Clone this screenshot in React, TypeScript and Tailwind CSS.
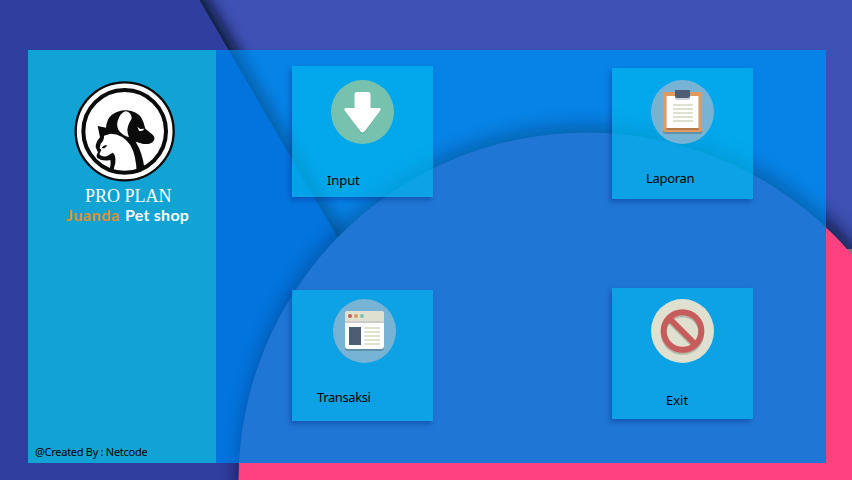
import React from "react";

type SceneProps = { left: string; right: string; circle: string; shade: number };

function Scene({ left, right, circle, shade }: SceneProps) {
  return (
    <g>
      <rect width="852" height="480" fill={right} />
      <path d="M120 -30L190 -30L354 249H120Z" fill="#00081c" opacity={shade} filter="url(#soft-line)" />
      <path d="M0 0H199.5L345 250V480H0Z" fill={left} />
      <circle cx="588" cy="473" r="347" fill="#00081c" opacity={shade} filter="url(#soft-circle)" />
      <rect x="840" y="249" width="12" height="12" fill="#85737c" />
      <circle cx="587" cy="481" r="348.5" fill={circle} />
    </g>
  );
}

function Backdrop() {
  return (
    <svg className="absolute inset-0" width="852" height="480" viewBox="0 0 852 480">
      <defs>
        <filter id="soft-line" x="-30%" y="-10%" width="160%" height="120%">
          <feGaussianBlur stdDeviation="7.5" />
        </filter>
        <filter id="soft-circle" x="-10%" y="-10%" width="120%" height="120%">
          <feGaussianBlur stdDeviation="10" />
        </filter>
        <clipPath id="panel">
          <rect x="216" y="50" width="610" height="413" />
        </clipPath>
      </defs>
      <Scene left="#303e9f" right="#3f51b5" circle="#ff4081" shade={0.85} />
      <g clipPath="url(#panel)">
        <Scene left="#0374de" right="#0783e7" circle="#2076d4" shade={0.3} />
      </g>
    </svg>
  );
}

function Logo() {
  return (
    <svg className="block" width="101" height="101" viewBox="42 31 303 303">
      <circle cx="194" cy="182" r="147" fill="#fff" stroke="#0b0b0b" strokeWidth="7" />
      <circle cx="194" cy="182" r="124" fill="#fff" stroke="#0b0b0b" strokeWidth="12" />
      <g transform="translate(90 102)">
        <path
          d="M23 64L48 69Q50 45 64 32Q85 16 110 17Q140 20 153 38Q162 52 166 72L188 90Q197 98 191 108Q184 120 160 118L137 111Q158 145 163 190L140 206Q139 152 121 121Q98 88 62 87L42 93Q43 107 32 117L29 130L34 136L28 148Q33 157 50 155L68 144Q78 149 76 174L68 206L56 196Q64 184 61 166Q37 171 22 160Q17 153 24 143L17 128Q17 112 30 98Z"
          fill="#0b0b0b"
        />
        <path d="M108 20Q124 22 125 42Q113 60 112 76Q113 88 117 98Q99 94 86 77Q76 60 88 36Q96 22 108 20Z" fill="#fff" />
        <path d="M142 66L151 73L163 72Q158 82 147 78Z" fill="#fff" />
        <path d="M35 131Q38 122 51 121Q48 132 35 131Z" fill="#0b0b0b" />
      </g>
    </svg>
  );
}

function Disc({ fill, children }: { fill: string; children: React.ReactNode }) {
  return (
    <svg className="block" width="63" height="64" viewBox="0 0 63 64">
      <ellipse cx="31.5" cy="32" rx="31.5" ry="32" fill={fill} />
      {children}
    </svg>
  );
}

const Arrow = () => (
  <Disc fill="#76c2af">
    <path d="M26 14H37Q39 14 39 16V28H48Q51 29 49 31L34 52Q31.500 55 29 52L14 31Q12 28 15 28H24V16Q24 14 26 14Z" fill="#000" opacity=".2" />
    <path d="M26 12H37Q39.500 12 39.500 14.500V28H48Q51 28 49 31L34 51Q31.500 54 29 51L14 31Q12 28 15 28H23.500V14.500Q23.500 12 26 12Z" fill="#fff" />
  </Disc>
);

const Clipboard = () => (
  <Disc fill="#77b3d4">
    <rect x="12" y="14" width="39" height="40" rx="2" fill="#000" opacity=".2" />
    <rect x="12" y="12" width="39" height="40" rx="2" fill="#e0995e" />
    <rect x="15.500" y="18" width="32" height="32" fill="#b3794a" />
    <rect x="15.500" y="16" width="32" height="32" fill="#fff" />
    <path d="M24 16H39V18Q39 20 37 20H26Q24 20 24 18Z" fill="#d0d0d8" />
    <path d="M24 10H39V16Q39 18 37 18H26Q24 18 24 16Z" fill="#4f5d73" />
    <path d="M22 25H42M22 29H42M22 33H42M22 37H42M22 41H42" stroke="#e0e0d1" strokeWidth="2" />
  </Disc>
);

const Browser = () => (
  <Disc fill="#77b3d4">
    <rect x="12" y="14" width="39" height="38" rx="3" fill="#000" opacity=".2" />
    <rect x="12" y="12" width="39" height="38" rx="3" fill="#fff" />
    <path d="M12 22V15Q12 12 15 12H48Q51 12 51 15V22Z" fill="#e0e0d1" />
    <rect x="12" y="22" width="39" height="2" fill="#ccc" />
    <circle cx="17" cy="17" r="2" fill="#c75c5c" />
    <circle cx="23" cy="17" r="2" fill="#e0995e" />
    <circle cx="29" cy="17" r="2" fill="#76c2af" />
    <rect x="16" y="28" width="12" height="18" fill="#4f5d73" />
    <path d="M31.500 29H47M31.500 33H47M31.500 37H47M31.500 41H47M31.500 45H47" stroke="#e0e0d1" strokeWidth="2" />
  </Disc>
);

const Prohibit = () => (
  <Disc fill="#e0e0d1">
    <g fill="none" stroke="#000" strokeOpacity=".2" strokeWidth="6">
      <circle cx="31.500" cy="34" r="18.800" />
      <path d="M18 21L45 48" />
    </g>
    <g fill="none" stroke="#c75c5c" strokeWidth="6">
      <circle cx="31.500" cy="32" r="18.800" />
      <path d="M18 19L45 46" />
    </g>
  </Disc>
);

type CardProps = { label: string; icon: React.ReactNode; iconClass: string; labelClass: string };

function Card({ label, icon, iconClass, labelClass }: CardProps) {
  return (
    <button className="flex h-[131px] w-[141px] flex-col items-start bg-[#02bcef]/63 shadow-[-2px_3px_5px_rgba(0,40,130,0.4)]">
      <span className={iconClass}>{icon}</span>
      <span className={`whitespace-nowrap font-['Noto_Sans',sans-serif] text-[13px] leading-4 text-black ${labelClass}`}>{label}</span>
    </button>
  );
}

export default function App() {
  return (
    <div className="relative h-[480px] w-[852px] overflow-hidden">
      <Backdrop />
      <div className="relative flex h-full pt-[50px] pr-[26px] pb-[17px] pl-7">
        <aside className="flex w-[188px] flex-col bg-[#11a3d3]">
          <div className="mt-[31px] ml-[46px]"><Logo /></div>
          <div className="mt-[4px] ml-[57px] whitespace-nowrap font-['Liberation_Serif',serif] text-[18px] leading-5 text-white">PRO PLAN</div>
          <div className="ml-[38px] flex gap-[4px] whitespace-nowrap font-['Lato'] text-[16px] leading-[18px] font-bold">
            <span className="w-[55px] tracking-[0.6px] text-[#e0902c]">Juanda</span>
            <span className="tracking-[0.25px] text-white">Pet shop</span>
          </div>
          <div className="mt-auto mb-[3px] ml-[7px] whitespace-nowrap font-['Noto_Sans',sans-serif] text-[11px] leading-4 tracking-[-0.28px] text-black">@Created By : Netcode</div>
        </aside>
        <main className="flex flex-1 gap-[179px] pl-[76px]">
          <section className="flex flex-col gap-[93px] pt-4">
            <Card label="Input" icon={<Arrow />} iconClass="mt-[14px] ml-[39px]" labelClass="mt-[28px] ml-[35px] tracking-[-0.1px]" />
            <Card label="Transaksi" icon={<Browser />} iconClass="mt-[9px] ml-[41px]" labelClass="mt-[26px] ml-[25px] tracking-[-0.4px]" />
          </section>
          <section className="flex flex-col gap-[89px] pt-[18px]">
            <Card label="Laporan" icon={<Clipboard />} iconClass="mt-3 ml-[39px]" labelClass="mt-[26px] ml-[34px] tracking-[-0.3px]" />
            <Card label="Exit" icon={<Prohibit />} iconClass="mt-[11px] ml-[39px]" labelClass="mt-[29px] ml-[54px]" />
          </section>
        </main>
      </div>
    </div>
  );
}
